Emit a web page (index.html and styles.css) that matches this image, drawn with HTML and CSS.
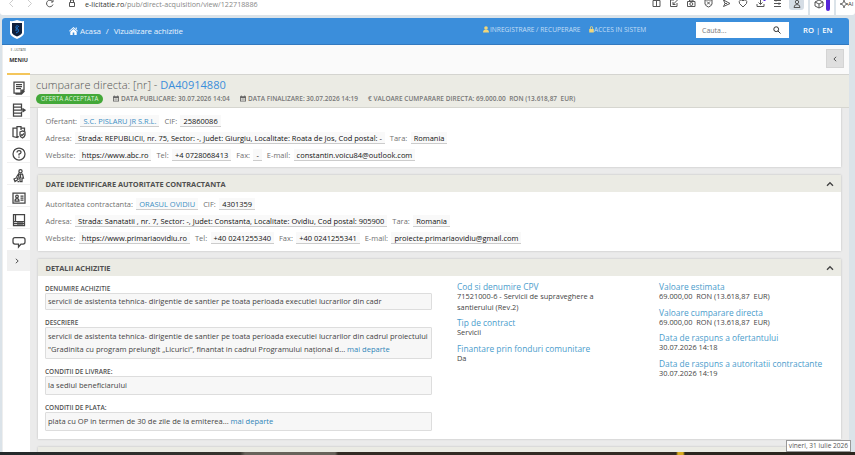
FILE: index.html
```html
<!DOCTYPE html>
<html lang="ro">
<head>
<meta charset="utf-8">
<title>Vizualizare achizitie</title>
<link rel="stylesheet" href="styles.css">
</head>
<body>
<div class="browser">
  <div class="toolbar">
    <svg class="nav" viewBox="0 0 80 15"><path class="dim" d="M13 0L9.500 3.500L13 7M28 0L31.500 3.500L28 7"/><path d="M52.500 1.500A3.300 3.300 0 1 0 53 4.500M53 0V2H51M69.500 2.500H74.500V6.500H69.500ZM70.500 2V0H73.500V2"/></svg>
    <div class="url"><b>e-licitatie.ro</b>/pub/direct-acquisition/view/122718886</div>
    <svg class="tools" viewBox="0 0 132 15"><path d="M1 .5H8V6.500H1ZM4.500 0V7M25 3V6.500H18.500V0H22M21 4.500L25.500 0M21 2V4.500H23.500M35.500 1.500H43V6.500H35.500ZM37.500 1V0H41V1M53 0H60V4Q59 6.500 56.500 7Q54 6.500 53 4ZM55 1.500L58 4.500M58 1.500L55 4.500M71.500 0L78 3.500L71.500 6.500L73 3.500ZM73 3.500H75M91 7L87.500 3.500Q86.500 1 88.500 0H90L91 1L92 0H93.500Q95.500 1 94.500 3.500ZM105 4V6.500H112V4M108.500 0V4.500M106.500 2.500L108.500 4.500L110.500 2.500M122 .5H129M122 3.500H129M122 6.500H129M124 0V1.500M127 2.500V5"/><circle cx="39.300" cy="4" r="1.500"/><path class="violet" d="M111.500 0H113.500"/></svg>
    <div class="profile"><svg viewBox="0 0 10 10"><circle cx="5" cy="2" r="1.700"/><path d="M2 7.500Q2 4.500 5 4.500T8 7.500Z"/></svg></div>
    <div class="ext"><svg viewBox="0 0 10 10"><path d="M1 2L5 0L9 2V6L5 8L1 6ZM1 2L5 4L9 2M5 4V8"/></svg><i></i></div>
    <div class="ai"><svg viewBox="0 0 8 9"><path d="M4 0L5 3L8 4L5 5L4 8L3 5L0 4L3 3Z"/></svg>AI</div>
  </div>
  <div class="page">
    <header class="header">
      <svg class="logo" viewBox="0 0 14 19"><path class="shield" d="M0 1Q4 1.500 7 0Q10 1.500 14 1V13Q14 16 7 19Q0 16 0 13Z"/><path class="shield-in" d="M2 3H12V12.500Q12 14.500 7 16.500Q2 14.500 2 12.500Z"/><path class="swirl" d="M7.500 5Q4 8 8 9Q10 12 6 13M9 6Q5 8 6 11"/></svg>
      <nav class="crumbs"><svg viewBox="0 0 9 8"><path d="M4.500 0L9 4L8.400 4.600L4.500 1.200L.6 4.600L0 4ZM1.300 4.800L4.500 2L7.700 4.800V8H5.300V5.500H3.700V8H1.300ZM6.700 .5H7.800V2.500L6.700 1.500Z"/></svg><span>Acasa</span><span>/</span><span>Vizualizare achizitie</span></nav>
      <div class="account"><svg viewBox="0 0 6 7"><circle cx="3" cy="2" r="1.800"/><path d="M0 6.500Q0 3.500 3 3.500T6 6.500Z"/></svg><span class="register">INREGISTRARE / RECUPERARE</span><svg class="lock" viewBox="0 0 5 7"><path d="M.2 3H.9V2Q.9 .3 2.500 .3T4.100 2V3H4.800V6.500H.2ZM1.700 3H3.300V2Q3.300 1.100 2.500 1.100T1.700 2Z"/></svg><span class="signin">ACCES IN SISTEM</span></div>
      <div class="search"><span>Cauta...</span><svg viewBox="0 0 8 8"><circle cx="3.200" cy="3.200" r="2.400"/><path d="M5 5L7.500 7.500"/></svg></div>
      <div class="lang">RO <i>|</i> EN</div>
    </header>
    <div class="body">
      <aside class="side">
        <div class="brand">E - LICITATIE</div>
        <div class="menu">MENIU</div>
        <a><svg viewBox="0 0 14 14"><path d="M2 1H12V9L9 12H2ZM12 9H9V12M4 3.500H10M4 5.500H10M4 7.500H9M3.500 13H9.500L12.500 10"/></svg></a>
        <a><svg viewBox="0 0 14 14"><path d="M1.500 1H9.500V4H1.500ZM1.500 4H9.500V7M1.500 4V10H9.500V8.500M1.500 7H12.500M10.500 5.500L13 7.200L10.500 9M1.500 10V13H9.500V10"/></svg></a>
        <a><svg viewBox="0 0 14 14"><path d="M5 3H1V11.500L5 12.500V1.500H9V5M9 3H12.500V6M5 12.500L7 11.500M8 7L10.500 6L13 7V10Q12.500 12 10.500 13Q8 12 8 10ZM9 9.500L10 10.500L12 8.500"/></svg></a>
        <a><svg viewBox="0 0 14 14"><circle cx="7" cy="7" r="6"/><path d="M5 5.500Q5 3.700 7 3.700T9 5.500Q9 6.500 7 7.200V8.500M7 9.500V10.700"/></svg></a>
        <a><svg viewBox="0 0 14 14"><circle cx="8.500" cy="2.300" r="1.600"/><path d="M6.500 5H10.500L11.500 9H10V12.500H8V9H7L6.500 5L4.500 8M2 10L5 8.500L6 10.500L3 12.500ZM5.500 12.500H7M8.500 5V9"/></svg></a>
        <a><svg viewBox="0 0 14 14"><path d="M1 2H13V12H1ZM3 10Q3 7.500 5 7.500T7 10ZM8.500 5H11.500M8.500 7H11.500M8.500 9H11.500"/><circle cx="5" cy="5.500" r="1.300"/></svg></a>
        <a><svg viewBox="0 0 14 14"><path d="M1.500 1.500H12.500V12.500H1.500ZM1.500 8.500H12.500M3.500 1.500V8M1.500 10.500H12.500M6 9V12M8 9V12M10 9V12"/></svg></a>
        <a><svg viewBox="0 0 14 14"><path d="M3 2.500H11Q13 2.500 13 4.500V7Q13 9 11 9H9L6.500 12V9H3Q1 9 1 7V4.500Q1 2.500 3 2.500Z"/></svg></a>
        <div class="expand"><svg viewBox="0 0 4 6"><path d="M.8 .8L3.200 3L.8 5.200"/></svg></div>
      </aside>
      <main class="main">
        <div class="strip"><button><svg viewBox="0 0 4 6"><path d="M3.200 .8L.9 3L3.200 5.200"/></svg></button></div>
        <div class="title">
          <h1>cumparare directa: [nr] - <b>DA40914880</b></h1>
          <div class="meta">
            <span class="badge">OFERTA ACCEPTATA</span>
            <span class="pub"><svg viewBox="0 0 7 7"><path d="M0 1H1V0H2V1H5V0H6V1H7V7H0ZM1 3V6H6V3Z"/><path d="M1 4.300H6M2.700 3V6M4.400 3V6" class="ln"/></svg>DATA PUBLICARE: 30.07.2026 14:04</span>
            <span class="fin"><svg viewBox="0 0 7 7"><path d="M0 1H1V0H2V1H5V0H6V1H7V7H0ZM1 3V6H6V3Z"/><path d="M1 4.300H6M2.700 3V6M4.400 3V6" class="ln"/></svg>DATA FINALIZARE: 30.07.2026 14:19</span>
            <span class="val">€ VALOARE CUMPARARE DIRECTA: 69.000.00 &nbsp;RON (13.618,87 &nbsp;EUR)</span>
          </div>
        </div>
        <div class="cards">
          <section class="card first">
            <div class="fields">
              <p><label>Ofertant:</label><a>S.C. PISLARU JR S.R.L.</a><label>CIF:</label><span>25860086</span></p>
              <p><label>Adresa:</label><span>Strada: REPUBLICII, nr. 75, Sector: -, Judet: Giurgiu, Localitate: Roata de Jos, Cod postal: -</span><label>Tara:</label><span>Romania</span></p>
              <p><label>Website:</label><span>https://www.abc.ro</span><label>Tel:</label><span>+4 0728068413</span><label>Fax:</label><span>-</span><label>E-mail:</label><span>constantin.voicu84@outlook.com</span></p>
            </div>
          </section>
          <section class="card">
            <h2>DATE IDENTIFICARE AUTORITATE CONTRACTANTA<svg viewBox="0 0 8 6"><path d="M1 4.800L4 1.800L7 4.800"/></svg></h2>
            <div class="fields">
              <p><label>Autoritatea contractanta:</label><a>ORASUL OVIDIU</a><label>CIF:</label><span>4301359</span></p>
              <p><label>Adresa:</label><span>Strada: Sanatatii , nr. 7, Sector: -, Judet: Constanta, Localitate: Ovidiu, Cod postal: 905900</span><label>Tara:</label><span>Romania</span></p>
              <p><label>Website:</label><span>https://www.primariaovidiu.ro</span><label>Tel:</label><span>+40 0241255340</span><label>Fax:</label><span>+40 0241255341</span><label>E-mail:</label><span>proiecte.primariaovidiu@gmail.com</span></p>
            </div>
          </section>
          <section class="card details">
            <h2>DETALII ACHIZITIE<svg viewBox="0 0 8 6"><path d="M1 4.800L4 1.800L7 4.800"/></svg></h2>
            <div class="grid">
              <div class="texts">
                <h3>DENUMIRE ACHIZITIE</h3>
                <div class="box name">servicii de asistenta tehnica- dirigentie de santier pe toata perioada executiei lucrarilor din cadr</div>
                <h3>DESCRIERE</h3>
                <div class="box desc">servicii de asistenta tehnica- dirigentie de santier pe toata perioada executiei lucrarilor din cadrul proiectului<br>"Gradinita cu program prelungit „Licurici”, finantat in cadrul Programului național d... <a>mai departe</a></div>
                <h3>CONDITII DE LIVRARE:</h3>
                <div class="box">la sediul beneficiarului</div>
                <h3>CONDITII DE PLATA:</h3>
                <div class="box">plata cu OP in termen de 30 de zile de la emiterea... <a>mai departe</a></div>
              </div>
              <dl>
                <dt>Cod si denumire CPV</dt><dd class="cpv">71521000-6 - Servicii de supraveghere a<br>santierului (Rev.2)</dd>
                <dt>Tip de contract</dt><dd>Servicii</dd>
                <dt>Finantare prin fonduri comunitare</dt><dd>Da</dd>
              </dl>
              <dl>
                <dt>Valoare estimata</dt><dd>69.000,00 &nbsp;RON (13.618,87 &nbsp;EUR)</dd>
                <dt>Valoare cumparare directa</dt><dd>69.000,00 &nbsp;RON (13.618,87 &nbsp;EUR)</dd>
                <dt>Data de raspuns a ofertantului</dt><dd>30.07.2026 14:18</dd>
                <dt>Data de raspuns a autoritatii contractante</dt><dd>30.07.2026 14:19</dd>
              </dl>
            </div>
          </section>
          <section class="card next"></section>
        </div>
      </main>
    </div>
  </div>
  <div class="taskbar"></div>
  <div class="tip">vineri, 31 iulie 2026</div>
</div>
</body>
</html>
```
FILE: styles.css
```css
* { box-sizing: border-box; }
body { margin: 0; font-family: "Open Sans", "Noto Sans", sans-serif; color: #444; }
p, h1, h2, h3, dl, dd { margin: 0; font-weight: 400; }
svg { display: block; fill: none; stroke: #555; stroke-width: 1; flex: none; overflow: hidden; }
.browser { position: relative; width: 855px; height: 455px; overflow: hidden; background: #dbe3e9; }

.toolbar { display: flex; height: 15px; background: #fff; border-radius: 0 0 3px 3px; }
.nav { width: 80px; height: 15px; }
.nav .dim { stroke: #ccc; }
.url { margin-left: 5px; width: 567px; font-size: 7.180px; line-height: 9px; color: #888; white-space: nowrap; }
.url b { font-weight: 400; color: #333; }
.tools { width: 132px; height: 15px; }
.tools .violet { stroke: #5a2be0; stroke-width: 2; }
.profile { width: 15px; height: 10px; background: #d5dde5; margin-left: 5px; border-radius: 0 0 3px 3px; padding-left: 3px; }
.profile svg, .ext svg { width: 10px; height: 10px; }
.ext { display: flex; margin-left: 4px; padding-left: 4px; border-left: 2px solid #dbe3e9; width: 28px; border-right: 2px solid #dbe3e9; }
.ext i { width: 4px; height: 11px; background: #5626d8; margin-left: 2px; border-radius: 0 0 2px 2px; }
.ai { display: flex; font-size: 6px; line-height: 8px; color: #333; padding-left: 4px; }
.ai svg { width: 8px; height: 9px; stroke-width: .8; }

.page { margin: 3px 6px 0 2px; height: 434px; overflow: hidden; background: #fff; border-radius: 3px 3px 0 0; }
.header { display: flex; height: 27px; background: #3b8edb; border-bottom: 1px solid #3279bf; color: #fff; }
.logo { width: 14px; height: 19px; margin: 2px 0 0 8px; stroke: none; }
.shield { fill: #fff; }
.shield-in { fill: #10203c; }
.swirl { stroke: #1d75cf; }
.crumbs { display: flex; align-items: center; gap: 5px; width: 414px; padding-left: 45px; font-size: 8px; letter-spacing: -.15px; color: #e8f2fb; height: 25px; }
.crumbs svg { width: 9px; height: 8px; fill: #fff; stroke: none; margin-right: -3px; }
.account { display: flex; align-items: center; width: 254px; height: 23px; padding-left: 45px; font-size: 6.600px; color: #c4def5; white-space: nowrap; }
.account svg { width: 6px; height: 7px; fill: #f1d679; stroke: none; }
.account .register { margin-left: 1px; width: 93px; }
.account .lock { width: 5px; margin-left: 6px; }
.search { display: flex; justify-content: space-between; align-items: center; width: 93px; height: 16px; margin: 4px 0 0 4px; padding: 0 8px 0 6px; background: #fff; color: #777; font-size: 7px; }
.search svg { width: 8px; height: 8px; stroke: #333; }
.lang { margin-left: 14px; font: 600 7.700px/24px "Open Sans", sans-serif; white-space: nowrap; }
.lang i { font-weight: 400; font-style: normal; }

.body { display: flex; height: 407px; }
.side { width: 28px; padding-left: 4px; background: #fff; flex: none; border-left: 1px solid #eee; display: flex; flex-direction: column; }
.brand { font-size: 2.700px; line-height: 5px; margin-top: 3px; text-align: center; color: #333; white-space: nowrap; }
.menu { font-size: 5.500px; font-weight: 700; line-height: 11px; height: 22px; text-align: center; color: #333; border-bottom: 2px solid #f4c65c; padding-top: 2px; flex: none; }
.side a { display: flex; align-items: center; justify-content: center; height: 22px; border-bottom: 1px solid #f0f0f0; padding: 4px 0 0 1px; flex: none; }
.side a svg { width: 14px; height: 14px; stroke: #444; stroke-width: 1.250; }
.expand { display: flex; align-items: center; justify-content: center; height: 20px; background: #f0f0f0; flex: none; padding-right: 3px; }
.expand svg { width: 4px; height: 6px; stroke: #555; }

.main { flex: 1; background: #ebebeb; min-width: 0; display: flex; flex-direction: column; }
.strip { display: flex; justify-content: flex-end; height: 29px; background: #fafafa; padding: 4px 5px 0 0; flex: none; }
.strip button { display: flex; align-items: center; justify-content: center; width: 18px; height: 19px; border: 1px solid #d4d4d4; background: #dfdfdf; padding: 0; }
.strip button svg { width: 4px; height: 6px; }
.title { height: 34px; flex: none; background: #ebebe4; border-top: 1px solid #d4d4d0; border-bottom: 1px solid #d6d6d0; padding: 2px 0 0 6px; }
h1 { font-size: 11.050px; line-height: 15px; font-weight: 300; color: #555; white-space: nowrap; }
h1 b { font-weight: 400; color: #3b8edb; }
.meta { display: flex; align-items: center; height: 11px; margin-top: 1px; font-size: 6.500px; color: #777; font-weight: 600; white-space: nowrap; }
.meta span { display: flex; align-items: center; gap: 2px; }
.meta .badge { width: 67px; height: 10px; justify-content: center; background: #43a838; color: #dff5dc; border-radius: 5px; font-weight: 400; font-size: 6.200px; }
.meta svg { width: 6px; height: 7px; fill: #666; stroke: none; }
.meta .ln { stroke: #888; stroke-width: .5; }
.meta .pub { width: 117px; margin-left: 10px; }
.meta .fin { width: 118px; margin-left: 10px; }
.meta .val { margin-left: 10px; letter-spacing: .02px; }

.cards { display: flex; flex-direction: column; gap: 8px; padding: 0 8px; flex: 1; }
.card { background: #fff; flex: none; height: 76px; box-shadow: 0 0 2px #bbb; }
.card.first { height: 59px; clip-path: inset(0 -3px -3px -3px); }
.first .fields { padding-top: 4px; }
.card.details { height: 180px; }
.card.next { height: 20px; background: #ebebe4; }
h2 { display: flex; justify-content: space-between; align-items: center; height: 17px; background: #ebebe4; font-size: 7.400px; font-weight: 700; color: #505050; padding: 1px 7px 0 7.500px; letter-spacing: -.03px; }
h2 svg { width: 8px; height: 6px; stroke: #444; stroke-width: 1.400; }
.fields { padding: 3px 0 0 7.500px; font-size: 7.480px; }
.fields p { display: flex; height: 17px; align-items: center; white-space: nowrap; }
.fields label { color: #707070; margin-right: 3.400px; }
.fields span, .fields a { background: #f9f9f9; border-bottom: 1px solid #ccc; color: #111; padding: 0 3px; height: 12px; line-height: 12px; margin-right: 5px; }
.fields a { color: #3d8fc4; }

.grid { display: grid; grid-template-columns: 387px 167px 1fr; column-gap: 0; padding-left: 7px; height: 163px; }
.texts { padding-top: 8px; font-size: 7.560px; }
h3 { font-size: 6.450px; font-weight: 600; line-height: 9px; height: 9px; color: #505050; margin-top: 8px; }
h3:first-child { margin-top: 0; }
.box { width: 387px; height: 19px; border: 1px solid #ddd; border-radius: 1px; background: #f7f7f7; padding: 0 0 0 2px; line-height: 17px; white-space: nowrap; }
.box.name { height: 17px; line-height: 15px; }
.box.desc { height: 32px; line-height: 12.700px; padding-top: 2px; }
.box a { color: #2f85b8; }
dl { padding: 5px 0 0 25px; white-space: nowrap; }
dl + dl { padding-left: 60px; }
dt { font-size: 8.400px; line-height: 11px; color: #4a9ccc; }
dd { font-size: 7.400px; line-height: 9px; margin-bottom: 5.600px; color: #444; }
dd.cpv { line-height: 10.500px; margin: -1px 0 5px; }

.taskbar { height: 3px; background: linear-gradient(90deg, #24292b 0, #37342e 240px, #68635b 245px, #68635b 335px, #332b24 338px, #332b24 676px, #d8ac20 678px, #d8ac20 683px, #2b261f 685px); }
.tip { position: absolute; right: 4px; bottom: 3px; width: 65px; height: 12px; border: 1px solid #999; background: #fff; font-size: 6.600px; line-height: 10px; text-align: center; color: #555; white-space: nowrap; }
```
